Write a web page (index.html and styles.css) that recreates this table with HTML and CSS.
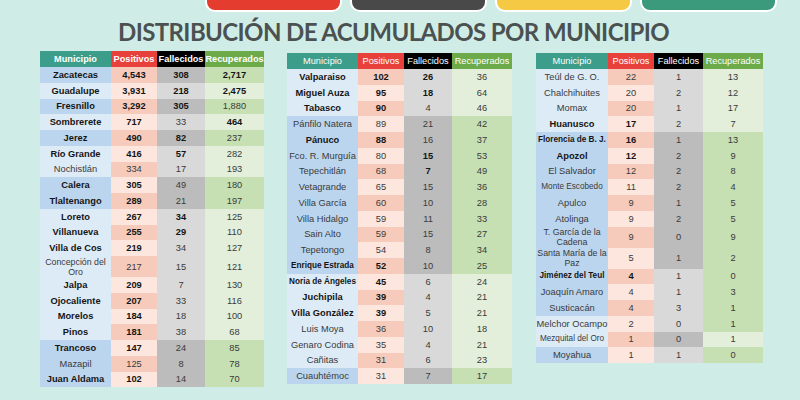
FILE: index.html
```html
<!DOCTYPE html>
<html lang="es">
<head>
<meta charset="utf-8">
<link rel="stylesheet" href="styles.css">
</head>
<body>
<div class="tabs">
  <div class="tab red"></div>
  <div class="tab gray"></div>
  <div class="tab yellow"></div>
  <div class="tab green"></div>
</div>
<h1 class="title">DISTRIBUCIÓN DE ACUMULADOS POR MUNICIPIO</h1>
<div class="tables">
  <div class="tbl t1 boldhead">
    <div class="row head"><div class="c m">Municipio</div><div class="c p">Positivos</div><div class="c f">Fallecidos</div><div class="c r">Recuperados</div></div>
    <div class="row d o"><div class="c m b">Zacatecas</div><div class="c p b">4,543</div><div class="c f b">308</div><div class="c r b">2,717</div></div>
    <div class="row"><div class="c m b">Guadalupe</div><div class="c p b">3,931</div><div class="c f b">218</div><div class="c r b">2,475</div></div>
    <div class="row d o"><div class="c m b">Fresnillo</div><div class="c p b">3,292</div><div class="c f b">305</div><div class="c r">1,880</div></div>
    <div class="row"><div class="c m b">Sombrerete</div><div class="c p b">717</div><div class="c f">33</div><div class="c r b">464</div></div>
    <div class="row d o"><div class="c m b">Jerez</div><div class="c p b">490</div><div class="c f b">82</div><div class="c r">237</div></div>
    <div class="row"><div class="c m b">Río Grande</div><div class="c p b">416</div><div class="c f b">57</div><div class="c r">282</div></div>
    <div class="row o"><div class="c m">Nochistlán</div><div class="c p">334</div><div class="c f">17</div><div class="c r">193</div></div>
    <div class="row d"><div class="c m b">Calera</div><div class="c p b">305</div><div class="c f">49</div><div class="c r">180</div></div>
    <div class="row d o"><div class="c m b">Tlaltenango</div><div class="c p b">289</div><div class="c f">21</div><div class="c r">197</div></div>
    <div class="row"><div class="c m b">Loreto</div><div class="c p b">267</div><div class="c f b">34</div><div class="c r">125</div></div>
    <div class="row o"><div class="c m b">Villanueva</div><div class="c p b">255</div><div class="c f b">29</div><div class="c r">110</div></div>
    <div class="row"><div class="c m b">Villa de Cos</div><div class="c p b">219</div><div class="c f">34</div><div class="c r">127</div></div>
    <div class="row o tall"><div class="c m sm">Concepción del Oro</div><div class="c p">217</div><div class="c f">15</div><div class="c r">121</div></div>
    <div class="row"><div class="c m b">Jalpa</div><div class="c p b">209</div><div class="c f">7</div><div class="c r">130</div></div>
    <div class="row o"><div class="c m b">Ojocaliente</div><div class="c p b">207</div><div class="c f">33</div><div class="c r">116</div></div>
    <div class="row"><div class="c m b">Morelos</div><div class="c p b">184</div><div class="c f">18</div><div class="c r">100</div></div>
    <div class="row o"><div class="c m b">Pinos</div><div class="c p b">181</div><div class="c f">38</div><div class="c r">68</div></div>
    <div class="row d"><div class="c m b">Trancoso</div><div class="c p b">147</div><div class="c f">24</div><div class="c r">85</div></div>
    <div class="row d o"><div class="c m">Mazapil</div><div class="c p">125</div><div class="c f">8</div><div class="c r">78</div></div>
    <div class="row d"><div class="c m b">Juan Aldama</div><div class="c p b">102</div><div class="c f">14</div><div class="c r">70</div></div>
  </div>

  <div class="tbl t2">
    <div class="row head"><div class="c m">Municipio</div><div class="c p">Positivos</div><div class="c f">Fallecidos</div><div class="c r">Recuperados</div></div>
    <div class="row o"><div class="c m b">Valparaiso</div><div class="c p b">102</div><div class="c f b">26</div><div class="c r">36</div></div>
    <div class="row"><div class="c m b">Miguel Auza</div><div class="c p b">95</div><div class="c f b">18</div><div class="c r">64</div></div>
    <div class="row o"><div class="c m b">Tabasco</div><div class="c p b">90</div><div class="c f">4</div><div class="c r">46</div></div>
    <div class="row d"><div class="c m">Pánfilo Natera</div><div class="c p">89</div><div class="c f">21</div><div class="c r">42</div></div>
    <div class="row d o"><div class="c m b">Pánuco</div><div class="c p b">88</div><div class="c f">16</div><div class="c r">37</div></div>
    <div class="row d"><div class="c m">Fco. R. Murguía</div><div class="c p">80</div><div class="c f b">15</div><div class="c r">53</div></div>
    <div class="row d o"><div class="c m">Tepechitlán</div><div class="c p">68</div><div class="c f b">7</div><div class="c r">49</div></div>
    <div class="row d"><div class="c m">Vetagrande</div><div class="c p">65</div><div class="c f">15</div><div class="c r">36</div></div>
    <div class="row d o"><div class="c m">Villa García</div><div class="c p">60</div><div class="c f">10</div><div class="c r">28</div></div>
    <div class="row d"><div class="c m">Villa Hidalgo</div><div class="c p">59</div><div class="c f">11</div><div class="c r">33</div></div>
    <div class="row d o"><div class="c m">Sain Alto</div><div class="c p">59</div><div class="c f">15</div><div class="c r">27</div></div>
    <div class="row d"><div class="c m">Tepetongo</div><div class="c p">54</div><div class="c f">8</div><div class="c r">34</div></div>
    <div class="row d o"><div class="c m b xs">Enrique Estrada</div><div class="c p b">52</div><div class="c f">10</div><div class="c r">25</div></div>
    <div class="row"><div class="c m b xs">Noria de Ángeles</div><div class="c p b">45</div><div class="c f">6</div><div class="c r">24</div></div>
    <div class="row o"><div class="c m b">Juchipila</div><div class="c p b">39</div><div class="c f">4</div><div class="c r">21</div></div>
    <div class="row"><div class="c m b">Villa González</div><div class="c p b">39</div><div class="c f">5</div><div class="c r">21</div></div>
    <div class="row o"><div class="c m">Luis Moya</div><div class="c p">36</div><div class="c f">10</div><div class="c r">18</div></div>
    <div class="row"><div class="c m">Genaro Codina</div><div class="c p">35</div><div class="c f">4</div><div class="c r">21</div></div>
    <div class="row o"><div class="c m">Cañitas</div><div class="c p">31</div><div class="c f">6</div><div class="c r">23</div></div>
    <div class="row d"><div class="c m">Cuauhtémoc</div><div class="c p">31</div><div class="c f">7</div><div class="c r">17</div></div>
  </div>

  <div class="tbl t3">
    <div class="row head"><div class="c m">Municipio</div><div class="c p">Positivos</div><div class="c f">Fallecidos</div><div class="c r">Recuperados</div></div>
    <div class="row o"><div class="c m">Teúl de G. O.</div><div class="c p">22</div><div class="c f">1</div><div class="c r">13</div></div>
    <div class="row"><div class="c m">Chalchihuites</div><div class="c p">20</div><div class="c f">2</div><div class="c r">12</div></div>
    <div class="row o"><div class="c m">Momax</div><div class="c p">20</div><div class="c f">1</div><div class="c r">17</div></div>
    <div class="row"><div class="c m b">Huanusco</div><div class="c p b">17</div><div class="c f">2</div><div class="c r">7</div></div>
    <div class="row d o"><div class="c m b xs">Florencia de B. J.</div><div class="c p b">16</div><div class="c f">1</div><div class="c r">13</div></div>
    <div class="row d"><div class="c m b">Apozol</div><div class="c p b">12</div><div class="c f">2</div><div class="c r">9</div></div>
    <div class="row d o"><div class="c m">El Salvador</div><div class="c p">12</div><div class="c f">2</div><div class="c r">8</div></div>
    <div class="row d"><div class="c m xs">Monte Escobedo</div><div class="c p">11</div><div class="c f">2</div><div class="c r">4</div></div>
    <div class="row d o"><div class="c m">Apulco</div><div class="c p">9</div><div class="c f">1</div><div class="c r">5</div></div>
    <div class="row d"><div class="c m">Atolinga</div><div class="c p">9</div><div class="c f">2</div><div class="c r">5</div></div>
    <div class="row d o tall"><div class="c m sm">T. García de la Cadena</div><div class="c p">9</div><div class="c f">0</div><div class="c r">9</div></div>
    <div class="row d tall"><div class="c m sm">Santa María de la Paz</div><div class="c p">5</div><div class="c f">1</div><div class="c r">2</div></div>
    <div class="row d o lf"><div class="c m b xs">Jiménez del Teul</div><div class="c p b">4</div><div class="c f">1</div><div class="c r">0</div></div>
    <div class="row d lf"><div class="c m">Joaquín Amaro</div><div class="c p">4</div><div class="c f">1</div><div class="c r">3</div></div>
    <div class="row d o lf"><div class="c m">Susticacán</div><div class="c p">4</div><div class="c f">3</div><div class="c r">1</div></div>
    <div class="row d lf lm"><div class="c m">Melchor Ocampo</div><div class="c p">2</div><div class="c f">0</div><div class="c r">1</div></div>
    <div class="row o"><div class="c m xs">Mezquital del Oro</div><div class="c p">1</div><div class="c f df">0</div><div class="c r">1</div></div>
    <div class="row d lf"><div class="c m">Moyahua</div><div class="c p">1</div><div class="c f">1</div><div class="c r">0</div></div>
  </div>
</div>
</body>
</html>
```

FILE: styles.css
```css
* { box-sizing: border-box; }
html, body { margin: 0; padding: 0; }
body {
  width: 800px;
  height: 400px;
  overflow: hidden;
  background: #cfede6;
  font-family: "Liberation Sans", Arial, sans-serif;
}
.tabs {
  display: flex;
  gap: 8px;
  padding-left: 205px;
  margin-top: -20px;
}
.tab {
  width: 137px;
  height: 32px;
  border: 2px solid #fff;
  border-radius: 10px;
}
.tab.red { background: #e43d30; }
.tab.gray { background: #4a4949; }
.tab.yellow { background: #f6c945; }
.tab.green { background: #3b9a7c; }
.title {
  margin: 6px 0 0 118px;
  font-family: Lato, "Open Sans", sans-serif;
  font-weight: 700;
  font-size: 24px;
  line-height: 28px;
  color: #4b5151;
  letter-spacing: -0.6px;
  white-space: nowrap;
}
.tables {
  display: flex;
  align-items: flex-start;
  padding-left: 40px;
  margin-top: 5px;
}
.tbl { display: flex; flex-direction: column; }
.t2 { margin-left: 23px; margin-top: 2px; }
.t3 { margin-left: 24px; margin-top: 2px; }
.row { display: flex; height: 15.75px; }
.row.head { height: 16px; }
.row.tall { height: 21px; }
.c {
  display: flex;
  align-items: center;
  justify-content: center;
  text-align: center;
  font-size: 9.3px;
  line-height: 10px;
  color: #3a3a3a;
  white-space: nowrap;
}
.c.m { width: 71px; background: #ddebf7; }
.c.p { width: 46px; background: #fce6de; }
.c.f { width: 48px; background: #d9d9d9; }
.c.r { width: 59px; background: #e3efda; }
.t3 .c.m { width: 72px; }
.t3 .c.f { width: 49px; }
.t2 .c.r, .t3 .c.r { width: 60px; }
.row.o .c.p { background: #f6cbbb; }
.row.d .c.m { background: #bcd5ee; }
.row.d .c.f { background: #bcbcbc; }
.row.d .c.r { background: #c6e0b4; }
.row.d.lf .c.f { background: #d9d9d9; }
.row.d.lm .c.m { background: #ddebf7; }
.row .c.f.df { background: #bcbcbc; }
.c.b { font-weight: 700; color: #151515; }
.c.sm { font-size: 8.8px; line-height: 10px; white-space: normal; }
.c.xs { font-size: 8.2px; }
.row.head .c { color: #fff; font-size: 9.2px; }
.row.head .c.m { background: #3b9d8a; }
.row.head .c.p { background: #e8413b; }
.row.head .c.f { background: #000; }
.row.head .c.r { background: #6dab4a; }
.boldhead .row.head .c { font-weight: 700; }
```
